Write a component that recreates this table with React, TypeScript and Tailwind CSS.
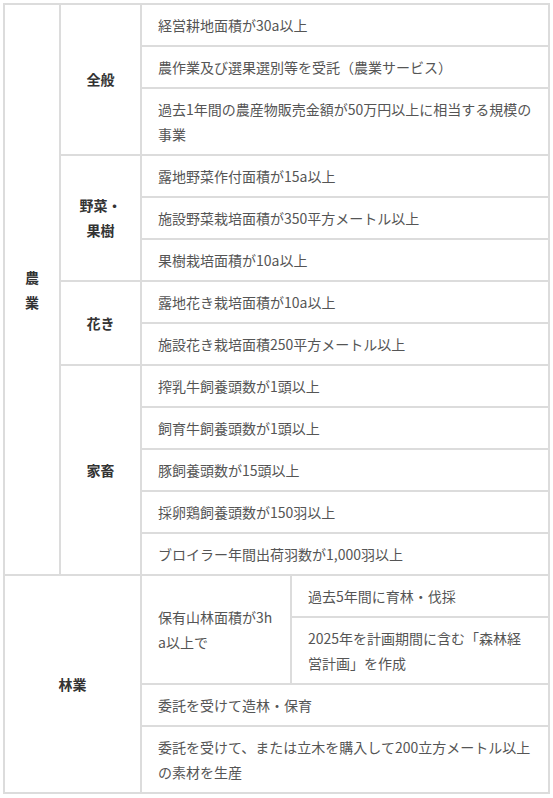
const font = { fontFamily: '"Noto Sans CJK JP", "Noto Sans", sans-serif' }

const cell = 'border-2 border-[#dcdcdc] px-4 py-[7.5px] text-left align-middle text-[#555]'
const head = 'border-2 border-[#dcdcdc] px-4 py-[7.5px] text-center align-middle font-bold text-[#333]'

export default function App() {
  return (
    <div className="min-h-screen bg-white pl-[3px] pt-[3px]" style={font}>
      <table className="w-[545px] table-fixed border-collapse border-2 border-[#dcdcdc] text-[14px] leading-[25px]">
        <colgroup>
          <col className="w-[56px]" />
          <col className="w-[81px]" />
          <col className="w-[150px]" />
          <col className="w-[258px]" />
        </colgroup>
        <tbody>
          {/* 農業 */}
          <tr>
            <td rowSpan={13} className={head}>農業</td>
            <td rowSpan={3} className={head}>全般</td>
            <td colSpan={2} className={cell}>経営耕地面積が30a以上</td>
          </tr>
          <tr>
            <td colSpan={2} className={cell}>農作業及び選果選別等を受託（農業サービス）</td>
          </tr>
          <tr>
            <td colSpan={2} className={cell}>過去1年間の農産物販売金額が50万円以上に相当する規模の事業</td>
          </tr>
          <tr>
            <td rowSpan={3} className={head}>野菜・果樹</td>
            <td colSpan={2} className={cell}>露地野菜作付面積が15a以上</td>
          </tr>
          <tr>
            <td colSpan={2} className={cell}>施設野菜栽培面積が350平方メートル以上</td>
          </tr>
          <tr>
            <td colSpan={2} className={cell}>果樹栽培面積が10a以上</td>
          </tr>
          <tr>
            <td rowSpan={2} className={head}>花き</td>
            <td colSpan={2} className={cell}>露地花き栽培面積が10a以上</td>
          </tr>
          <tr>
            <td colSpan={2} className={cell}>施設花き栽培面積250平方メートル以上</td>
          </tr>
          <tr>
            <td rowSpan={5} className={head}>家畜</td>
            <td colSpan={2} className={cell}>搾乳牛飼養頭数が1頭以上</td>
          </tr>
          <tr>
            <td colSpan={2} className={cell}>飼育牛飼養頭数が1頭以上</td>
          </tr>
          <tr>
            <td colSpan={2} className={cell}>豚飼養頭数が15頭以上</td>
          </tr>
          <tr>
            <td colSpan={2} className={cell}>採卵鶏飼養頭数が150羽以上</td>
          </tr>
          <tr>
            <td colSpan={2} className={cell}>ブロイラー年間出荷羽数が1,000羽以上</td>
          </tr>

          {/* 林業 */}
          <tr>
            <td rowSpan={4} colSpan={2} className={head}>林業</td>
            <td rowSpan={2} className={`${cell} break-all`}>保有山林面積が3ha以上で</td>
            <td className={cell}>過去5年間に育林・伐採</td>
          </tr>
          <tr>
            <td className={cell}>2025年を計画期間に含む「森林経営計画」を作成</td>
          </tr>
          <tr>
            <td colSpan={2} className={cell}>委託を受けて造林・保育</td>
          </tr>
          <tr>
            <td colSpan={2} className={cell}>委託を受けて、または立木を購入して200立方メートル以上の素材を生産</td>
          </tr>
        </tbody>
      </table>
    </div>
  )
}
